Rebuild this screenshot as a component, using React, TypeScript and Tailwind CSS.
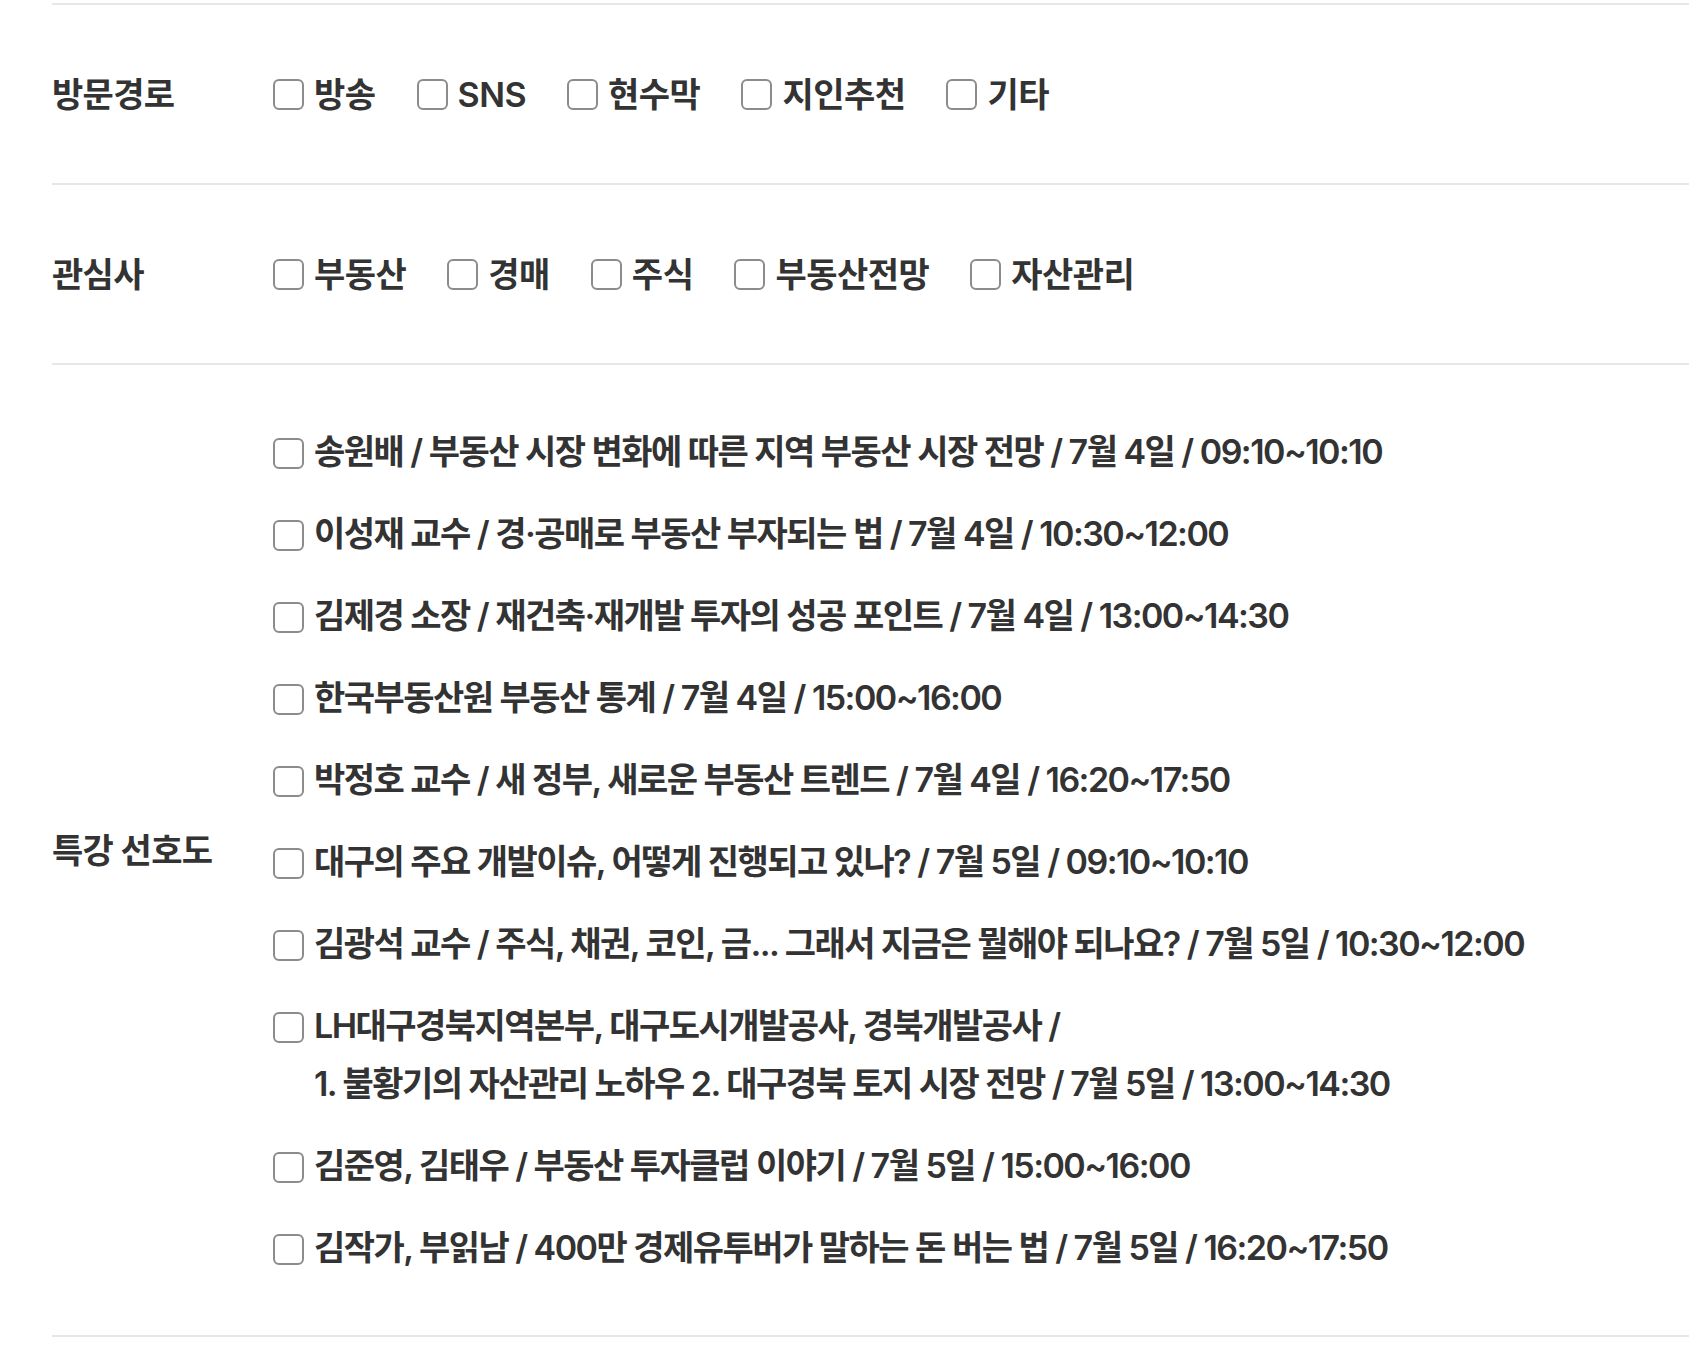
import React from 'react';

const visitRoutes = ['방송', 'SNS', '현수막', '지인추천', '기타'];
const interests = ['부동산', '경매', '주식', '부동산전망', '자산관리'];

const lectures: string[][] = [
  ['송원배 / 부동산 시장 변화에 따른 지역 부동산 시장 전망 / 7월 4일 / 09:10~10:10'],
  ['이성재 교수 / 경·공매로 부동산 부자되는 법 / 7월 4일 / 10:30~12:00'],
  ['김제경 소장 / 재건축·재개발 투자의 성공 포인트 / 7월 4일 / 13:00~14:30'],
  ['한국부동산원 부동산 통계 / 7월 4일 / 15:00~16:00'],
  ['박정호 교수 / 새 정부, 새로운 부동산 트렌드 / 7월 4일 / 16:20~17:50'],
  ['대구의 주요 개발이슈, 어떻게 진행되고 있나? / 7월 5일 / 09:10~10:10'],
  ['김광석 교수 / 주식, 채권, 코인, 금... 그래서 지금은 뭘해야 되나요? / 7월 5일 / 10:30~12:00'],
  [
    'LH대구경북지역본부, 대구도시개발공사, 경북개발공사 /',
    '1. 불황기의 자산관리 노하우 2. 대구경북 토지 시장 전망 / 7월 5일 / 13:00~14:30',
  ],
  ['김준영, 김태우 / 부동산 투자클럽 이야기 / 7월 5일 / 15:00~16:00'],
  ['김작가, 부읽남 / 400만 경제유투버가 말하는 돈 버는 법 / 7월 5일 / 16:20~17:50'],
];

const Box: React.FC = () => (
  <input
    type="checkbox"
    className="h-[31px] w-[31px] shrink-0 appearance-none rounded-[6px] border-2 border-[#8c8c8c] bg-white"
  />
);

const InlineOption: React.FC<{ label: string }> = ({ label }) => (
  <label className="mr-[41px] flex items-center gap-[10px]">
    <Box />
    <span>{label}</span>
  </label>
);

const Row: React.FC<{ title: string; children: React.ReactNode; className?: string }> = ({
  title,
  children,
  className,
}) => (
  <div className={`flex items-center border-t-2 border-[#e5e8eb] ${className ?? ''}`}>
    <div className="w-[221px] shrink-0 font-bold tracking-[-0.02em]">{title}</div>
    {children}
  </div>
);

export default function App() {
  return (
    <div
      className="min-h-screen bg-white pl-[52px] pt-[3px] text-[34px] text-[#333333]"
      style={{ fontFamily: 'Inter, "Noto Sans CJK KR", sans-serif' }}
    >
      <Row title="방문경로" className="h-[180px]">
        <div className="flex items-center font-semibold tracking-[-0.015em]">
          {visitRoutes.map(r => (
            <InlineOption key={r} label={r} />
          ))}
        </div>
      </Row>

      <Row title="관심사" className="h-[180px]">
        <div className="flex items-center font-semibold tracking-[-0.015em]">
          {interests.map(r => (
            <InlineOption key={r} label={r} />
          ))}
        </div>
      </Row>

      <Row title="특강 선호도" className="border-b-2 py-[58px]">
        <div className="flex flex-col gap-[24px] font-semibold tracking-[-0.045em]">
          {lectures.map((lines, i) => (
            <label key={i} className="flex items-start gap-[10px]">
              <span className="mt-[15px] flex">
                <Box />
              </span>
              <span className="leading-[58px]">
                {lines.map((l, j) => (
                  <span key={j} className="block">
                    {l}
                  </span>
                ))}
              </span>
            </label>
          ))}
        </div>
      </Row>
    </div>
  );
}
